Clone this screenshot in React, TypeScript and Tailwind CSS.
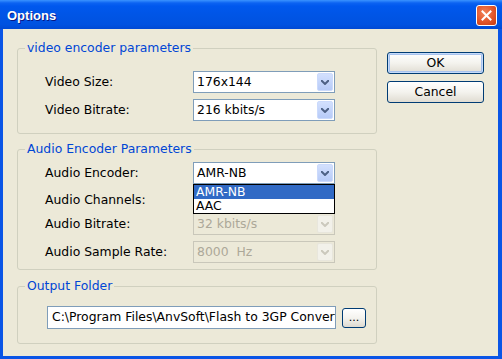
import React from "react";

const Chevron = ({ color }: { color: string }) => (
  <svg width="8" height="5" viewBox="0 0 8 5" className="block">
    <polyline points="0.7,0.7 4,4 7.3,0.7" fill="none" stroke={color} strokeWidth="2" strokeLinecap="square" />
  </svg>
);

function Combo({ value, disabled, children }: { value: string; disabled?: boolean; children?: React.ReactNode }) {
  return (
    <div
      className={
        disabled
          ? "relative flex w-[142px] h-[22px] border border-[#C9C7BA] bg-[#ECE9D8] text-[#ACA899]"
          : "relative flex w-[142px] h-[22px] border border-[#7F9DB9] bg-white text-black"
      }
    >
      <div className="flex-1 flex items-center pl-[3px] whitespace-pre leading-none">{value}</div>
      <div
        className={
          disabled
            ? "my-px mr-px w-[16px] rounded-[2px] border border-[#E8E6DC] bg-[#F2F1EA] flex items-center justify-center"
            : "my-px mr-px w-[16px] rounded-[2px] border border-[#CBDAFC] bg-linear-to-b from-[#D3E0FD] to-[#B7CBF8] flex items-center justify-center"
        }
      >
        <Chevron color={disabled ? "#CBC9BD" : "#4D6185"} />
      </div>
      {children}
    </div>
  );
}

function Row({ label, children, className }: { label: string; children: React.ReactNode; className?: string }) {
  return (
    <div className={"flex items-center h-[22px] pl-[27px] " + (className ?? "")}>
      <div className="w-[148px] text-black leading-none">{label}</div>
      {children}
    </div>
  );
}

export default function App() {
  return (
    <div className="w-[502px] h-[359px] flex flex-col bg-[#0A55E6] font-['DejaVu_Sans',sans-serif] text-[12.4px] overflow-hidden">
      {/* Title bar */}
      <div className="h-[29px] shrink-0 flex items-center pt-[2px] pl-[7px] pr-[5px] bg-[linear-gradient(180deg,#3A93FF_0px,#0C63F2_3px,#0058EE_6px,#0055E6_50%,#0052E0_85%,#0049D4_100%)]">
        <span className="font-['Liberation_Sans',Arial,sans-serif] font-bold text-[13px] text-white [text-shadow:1px_1px_0_#0A1883] leading-none">
          Options
        </span>
        <div className="ml-auto w-[21px] h-[21px] rounded-[3px] border border-white bg-[radial-gradient(circle_at_40%_35%,#F2835A_0%,#E2552A_55%,#C63A12_100%)] flex items-center justify-center">
          <svg width="11" height="11" viewBox="0 0 11 11">
            <path d="M1.5 1.5 L9.5 9.5 M9.5 1.5 L1.5 9.5" stroke="white" strokeWidth="2" strokeLinecap="square" />
          </svg>
        </div>
      </div>

      {/* Body */}
      <div className="flex-1 ml-[3px] mr-[4px] mb-[3px] bg-[#ECE9D8] flex">
        {/* Left column */}
        <div className="pl-[14px] pt-[12px] w-[374px] flex flex-col">
          {/* Video group */}
          <fieldset className="w-[360px] border border-[#D0D0BF] rounded-[3px] pb-[12px]">
            <legend className="ml-[7px] px-[2px] leading-[14px] text-[#0046D5]">video encoder parameters</legend>
            <Row label="Video Size:" className="mt-[16px]">
              <Combo value="176x144" />
            </Row>
            <Row label="Video Bitrate:" className="mt-[6px]">
              <Combo value="216 kbits/s" />
            </Row>
          </fieldset>

          {/* Audio group */}
          <fieldset className="mt-[8px] w-[360px] border border-[#D0D0BF] rounded-[3px] pb-[6px]">
            <legend className="ml-[7px] px-[2px] leading-[14px] text-[#0046D5]">Audio Encoder Parameters</legend>
            <Row label="Audio Encoder:" className="mt-[6px] relative z-10">
              <Combo value="AMR-NB">
                <div className="absolute left-[-1px] top-[21px] w-[142px] border border-black bg-white">
                  <div className="h-[14px] bg-[#316AC5] text-white pl-[2px] flex items-center leading-none">AMR-NB</div>
                  <div className="h-[14px] text-black pl-[2px] flex items-center leading-none">AAC</div>
                </div>
              </Combo>
            </Row>
            <Row label="Audio Channels:" className="mt-[5px]">
              <Combo value="" />
            </Row>
            <Row label="Audio Bitrate:" className="mt-[2px]">
              <Combo value="32 kbits/s" disabled />
            </Row>
            <Row label="Audio Sample Rate:" className="mt-[6px]">
              <Combo value="8000  Hz" disabled />
            </Row>
          </fieldset>

          {/* Output folder */}
          <fieldset className="mt-[9px] w-[360px] border border-[#D0D0BF] rounded-[3px] pb-[14px]">
            <legend className="ml-[7px] px-[2px] leading-[14px] text-[#0046D5]">Output Folder</legend>
            <div className="mt-[13px] pl-[29px] flex items-center">
              <div className="w-[289px] h-[23px] border border-[#7F9DB9] bg-white flex items-center pl-[4px] whitespace-nowrap overflow-hidden text-black leading-none">
                {"C:\\Program Files\\AnvSoft\\Flash to 3GP Converter"}
              </div>
              <button className="ml-[6px] w-[24px] h-[20px] rounded-[3px] border border-[#003C74] bg-linear-to-b from-white via-[#F4F3EE] to-[#DEDAD0] text-black text-[11px] leading-none flex items-end justify-center pb-[4px]">
                ...
              </button>
            </div>
          </fieldset>
        </div>

        {/* Right column */}
        <div className="ml-[10px] pt-[23px] flex flex-col gap-[7px]">
          <button className="w-[97px] h-[22px] rounded-[3px] border border-[#003C74] bg-linear-to-b from-white via-[#F4F3EE] to-[#E0DCD2] shadow-[inset_0_0_0_1px_#C6DBF9,inset_0_0_0_2px_#A7C2EE] text-black leading-none flex items-center justify-center">
            OK
          </button>
          <button className="w-[97px] h-[22px] rounded-[3px] border border-[#003C74] bg-linear-to-b from-white via-[#F4F3EE] to-[#E0DCD2] text-black leading-none flex items-center justify-center">
            Cancel
          </button>
        </div>
      </div>
    </div>
  );
}
